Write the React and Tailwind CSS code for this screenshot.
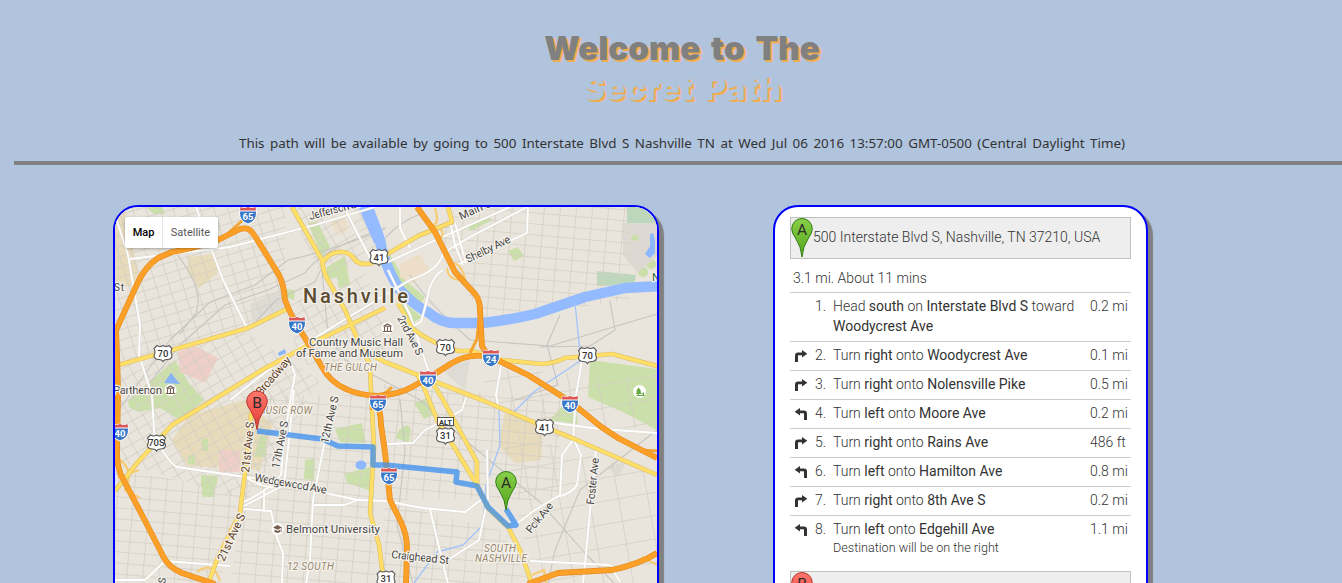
import React from "react";

const major = [
  "M115 334L117 328L138 282Q146 266 158 258L172 252Q195 248 218 240L240 229Q248 227 252 232L258 241L279 275Q284 285 285 300L290 312L297 325L308 343L322 367Q330 382 346 389Q358 395 378 396Q400 394 412 387L428 378L452 363Q468 354 483 356L495 359L528 375L552 390L572 403L600 426L618 438L657 458",
  "M417 207L435 232L455 272L475 294Q480 300 480 310L482 346L488 356",
  "M116 330L117 355L118 390L117 453Q117 465 121 475L142 515L163 556Q168 567 182 573L215 584",
  "M374 396Q381 410 381 425L384 445L387 470L390 500L401 522Q407 535 407 548L406 584",
  "M528 584L558 573L612 570Q640 564 657 553",
];
const yellow = [
  "M115 366L172 350L248 328L287 309",
  "M115 491L138 462L172 425L205 405L262 370L312 343L385 308",
  "M292 207L322 260Q323 272 329 282L345 310L362 350L370 364L371 392L374 447L370 513L379 545L384 584",
  "M323 262Q330 251 343 252Q351 253 355 260Q361 266 372 263L418 236L452 222L448 207",
  "M398 303L412 328Q430 343 458 351L472 351L502 360L542 364Q555 363 565 358L612 354L657 366",
  "M362 350L385 362L418 375L482 400L545 427L572 438L657 475",
  "M418 376L425 390L438 422L456 450L477 485",
  "M432 382L442 398L477 462L477 485L488 508L508 527L520 550L532 584",
  "M256 400L251 415L250 433L240 513L218 557L208 584",
];
const white = [
  "M115 215L128 255L140 325L139 355L152 395L154 432Q165 460 177 467L245 477Q268 490 276 487M245 477L285 481L330 494L358 500L385 501L423 508L465 512L482 499",
  "M196 207L211 248L223 280L247 328",
  "M130 259L230 247L315 225L375 207",
  "M344 207L372 262",
  "M230 400L290 353L385 295L410 280Q440 270 443 253L470 237L527 207",
  "M447 207L455 245L463 265M455 223L466 263",
  "M400 207L400 228L410 248",
  "M388 262L440 238L490 216L510 207",
  "M457 265L527 233L528 207",
  "M410 328L421 322L427 300Q430 278 443 270",
  "M388 270L410 315L435 391",
  "M288 355L295 375L292 390L284 440L281 475Q269 490 244 502M294 390L290 430L284 485L244 506M264 490L264 512M244 509L271 511L276 535L283 553L282 583",
  "M335 400L325 440L313 500L310 560L306 584",
  "M314 505L345 505L360 499",
  "M115 580L145 580L165 561L230 566",
  "M502 360L496 395L498 405M582 360L576 395L573 440L562 455L560 495L535 510L508 530",
  "M574 440L581 455L577 485Q573 493 557 497",
  "M596 450L586 553L583 584",
  "M555 423L600 429L657 433",
  "M530 561L610 565L620 582M430 509L436 535L448 584",
  "M387 444L413 443L425 430L450 417L462 410L466 398",
  "M487 450L488 498L479 540L440 565",
];
const rails = [
  "M140 395L180 345L225 305L268 290L305 273Q320 250 385 228",
  "M115 415L170 340L210 302L255 285L288 260Q335 250 385 229",
  "M248 330L276 300L315 282L330 250",
  "M176 253Q205 290 196 313L180 334",
  "M322 270L328 335L345 360L420 400L465 440L540 502L584 552L615 584",
  "M386 237Q400 222 420 214M410 275Q425 300 470 340L550 346L657 314",
  "M610 301L615 330L590 346L540 347M560 315L547 345L558 385L515 400",
  "M400 400L405 450L397 525L413 584",
  "M548 584L555 550L580 490L657 430",
];
const grids = [
  ["115,207 285,207 285,305 235,332 115,362", "ga"],
  ["286,305 365,274 405,355 300,366", "gb"],
  ["115,365 245,332 320,380 245,500 115,460", "gb"],
  ["245,395 373,395 375,583 230,583 245,500", "gc"],
  ["115,470 240,490 220,583 115,583", "gc"],
  ["290,207 372,207 390,250 322,280", "gb"],
  ["450,207 630,207 630,300 485,320 440,250", "gc"],
  ["384,384 560,400 560,500 384,500", "gc"],
  ["384,501 500,530 530,583 384,583", "gc"],
  ["480,370 657,375 657,430 500,420", "gd"],
  ["500,430 657,475 657,583 533,583", "gd"],
];

function Interstate({ x, y, n }) {
  return (
    <g transform={`translate(${x} ${y})`}>
      <path d="M-7.5-8Q-4-6 0-8Q4-6 7.5-8L8.5-3Q9 6 0 9Q-9 6-8.5-3Z" fill="#3877c8" stroke="#fff" strokeWidth="1" />
      <path d="M-7.5-8Q-4-6 0-8Q4-6 7.5-8L8-4H-8Z" fill="#dc5655" />
      <path d="M-8-4H8" stroke="#fff" strokeWidth="1" />
      <text y="4.5" textAnchor="middle" fontSize="9.5" fontWeight="700" fill="#fff">{n}</text>
    </g>
  );
}
function Route({ x, y, n }) {
  return (
    <g transform={`translate(${x} ${y})`}>
      <path d="M-6-8Q-3-6 0-8Q3-6 6-8L9-5Q7-2 9 2Q9 6 4 6Q1 6 0 8Q-1 6-4 6Q-9 6-9 2Q-7-2-9-5Z" fill="#fff" stroke="#555" strokeWidth="1.1" />
      <text y="3.2" textAnchor="middle" fontSize="9.5" fontWeight="500" fill="#333">{n}</text>
    </g>
  );
}
function PinShape({ red, letter }) {
  return (
    <g>
      <path d="M11 39Q10.3 29 4.5 20Q.7 15 .7 10.8A10.3 10.3 0 0 1 21.3 10.8Q21.3 15 17.5 20Q11.7 29 11 39Z" fill={red ? "url(#redpin)" : "url(#greenpin)"} stroke={red ? "#b6312b" : "#2f7d16"} strokeWidth="1" />
      <text x="11" y="17.3" textAnchor="middle" fontSize="15.5" fontWeight="400" fill="#2b2b2b" fontFamily="Roboto, sans-serif">{letter}</text>
    </g>
  );
}
function Gradients() {
  return (
    <defs>
      <linearGradient id="redpin" x1="0" y1="0" x2="0" y2="1"><stop stopColor="#ff776b" /><stop offset="1" stopColor="#e03a33" /></linearGradient>
      <linearGradient id="greenpin" x1="0" y1="0" x2="0" y2="1"><stop stopColor="#88cf48" /><stop offset="1" stopColor="#55a51c" /></linearGradient>
    </defs>
  );
}
function Grid({ id, angle, w, h }) {
  return (
    <pattern id={id} width={w} height={h} patternUnits="userSpaceOnUse" patternTransform={`rotate(${angle})`}>
      <path d={`M0 0H${w}M0 0V${h}`} stroke="#d3cec4" strokeWidth="1.5" fill="none" />
    </pattern>
  );
}
function Label({ x, y, w, r = 0, children, color = "#444", size = 11, italic }) {
  return (
    <text x={x} y={y} textLength={w} transform={r ? `rotate(${r} ${x} ${y})` : undefined} fontSize={size} fill={color} fontStyle={italic ? "italic" : "normal"} fontWeight={400} stroke="#f5f2ec" strokeWidth="2.5" strokeLinejoin="round" paintOrder="stroke">{children}</text>
  );
}
const draw = (list, stroke, strokeWidth) => list.map((d) => <path key={d} d={d} stroke={stroke} strokeWidth={strokeWidth} />);

function CityMap() {
  return (
    <svg viewBox="115 207 542 542" className="block h-[542px] w-[542px]" fontFamily="Roboto, sans-serif">
      <Gradients />
      <defs>
        <Grid id="ga" angle={-17} w={13} h={10} />
        <Grid id="gb" angle={-30} w={12} h={10} />
        <Grid id="gc" angle={5} w={16} h={11} />
        <Grid id="gd" angle={-10} w={29} h={23} />
      </defs>
      <rect x="115" y="207" width="542" height="542" fill="#e9e5dc" />
      <g fill="#e7dbbc">
        <path d="M115 207L125 207L139 275L130 286L115 286Z" /><path d="M188 257L215 254L218 273L199 288L187 272Z" />
        <path d="M190 415L245 400L273 424L260 470L188 466L172 440Z" /><path d="M505 413L543 427L541 460L515 463L498 445Z" />
      </g>
      <g fill="#cbdfaa">
        <path d="M128 400L175 360L188 382L204 400L180 420L160 408L138 412L129 407Z" /><path d="M308 223L317 221L330 247L322 257Z" />
        <path d="M327 267L345 256L350 285L339 288L337 277L327 280Z" /><path d="M387 250L406 281L425 297L420 305L400 290Z" />
        <path d="M402 301L422 317L412 324L404 320Z" /><path d="M508 251L518 247L524 256L514 261Z" /><path d="M467 226L488 215L492 220L471 231Z" />
        <path d="M590 360L657 369L657 430L623 412L588 397Z" /><path d="M335 429L362 423L366 443L340 442Z" /><path d="M345 474L370 467L371 491L347 483Z" />
        <path d="M305 460L315 459L314 480L304 479Z" /><path d="M396 438Q398 427 408 425L411 430L409 443Z" /><path d="M414 403L429 397L434 415L424 419Z" />
        <path d="M562 406L575 404L578 424L550 420Z" /><path d="M201 475L218 476L216 487H201ZM202 485H214V497H202Z" />
        <path d="M188 455H195V464H188ZM202 439H208V451H202ZM260 436H266V457H254Z" />
        <circle cx="643" cy="272" r="5" /><circle cx="651" cy="264" r="5" /><path d="M146 207H162L165 214H154ZM286 289L295 290L294 300L287 298Z" />
      </g>
      <g fill="#bdd7bd"><path d="M597 271L636 275L634 284L597 286ZM627 207H657V223H627Z" /></g>
      <path d="M623 223H657V256L637 273L623 255Z" fill="#ddd8d1" />
      <path d="M632 235L639 236L638 241L631 240Z" fill="#cbdfaa" />
      <g fill="#dedbd5"><path d="M250 304L281 290L291 308L252 320ZM442 370L470 360L465 390ZM607 467L628 460L618 477Z" /></g>
      <g fill="#edcfc7"><path d="M178 352L195 346L218 358L205 383L180 372ZM219 450H240V472H219Z" /></g>
      <path d="M400 264L420 254L430 270L412 284L400 277Z" fill="#ecdec9" /><path d="M330 222L345 217L348 230L337 235Z" fill="#ecdec9" />
      {grids.map(([points, id]) => <polygon key={points} points={points} fill={`url(#${id})`} />)}
      <g fill="none" strokeLinejoin="round">
        <g strokeLinecap="round">{draw(rails, "#c6c5c2", 1.1)}</g>
        <path d="M366 203Q373 220 380 240Q384 266 400 290Q415 306 429 313Q441 323 455 323L482 323Q510 320 535 314L585 297L625 288L660 286" stroke="#94bbff" strokeWidth="10.5" />
        <path d="M362 203L379 242" stroke="#94bbff" strokeWidth="10" />
        <path d="M650 234L653 233L655 240V253L650 258L645 254L650 246Z" fill="#8db7ff" />
        <path d="M575 303L580 353M580 361L535 391L514 412L499 409L500 445L486 485L483 525L463 545L437 552L414 583" stroke="#a3c4fa" strokeWidth="1.3" />
        <path d="M164 383L171 373L180 384ZM278 353L285 349L286 353L279 356Z" fill="#86b4f7" />
        <ellipse cx="361" cy="465" rx="5.5" ry="4.5" fill="#8db7ff" />
        {draw(white, "#dedad1", 2.8)}
        {draw(white, "#fff", 1.8)}
        <path d="M435 208Q440 225 432 225Q448 230 440 239M447 268Q448 282 465 279Q462 265 454 263M119 459Q135 470 125 490L140 498M118 478L139 470M197 572Q213 560 220 581M642 557L657 565M532 575L544 570L546 583" stroke="#f6cc76" strokeWidth="2.2" />
        {draw(yellow, "#d9bc64", 4.6)}
        {draw(yellow, "#ffdf68", 3.5)}
        <path d="M225 236L243 220M479 320L477 339L470 353M376 397Q386 394 392 387M617 436L640 450L657 451M376 397L371 410" stroke="#f4a531" strokeWidth="3" />
        {draw(major, "#e28a1d", 5.8)}
        {draw(major, "#fca027", 4.6)}
        <path d="M257 431L322 439L338 446L373 447L373 465L385 465L457 472L456 482L477 486L488 507L508 526L516 525L506 509" stroke="#398ff0" strokeOpacity=".75" strokeWidth="5.5" />
      </g>
      <Label x="310" y="220" r="-15" w="52">Jefferson St</Label>
      <Label x="461" y="220" r="-24" w="38">Main St</Label>
      <Label x="468" y="263" r="-26" w="48">Shelby Ave</Label>
      <Label x="114" y="291" w="10" size="10">St</Label>
      <text x="303" y="303" textLength="105" fontSize="20" fontWeight="500" fill="#5b4b31" stroke="#f5f2ec" strokeWidth="2.5" paintOrder="stroke">Nashville</text>
      <Label x="309" y="346" w="94" size="11.5">Country Music Hall</Label>
      <Label x="296" y="357" w="107" size="11.5">of Fame and Museum</Label>
      <Label x="324" y="370.5" w="53" color="#95866d" size="10" italic>THE GULCH</Label>
      <Label x="397" y="318" r="62" w="43">2nd Ave S</Label>
      <Label x="261" y="396" r="-49" w="47" color="#62401f" size="11.5">Broadway</Label>
      <Label x="113" y="394" w="49" size="11.5">Parthenon</Label>
      <Label x="257" y="413.5" w="55" color="#95866d" size="10" italic>MUSIC ROW</Label>
      <Label x="279" y="469" r="-79" w="48">17th Ave S</Label>
      <Label x="328" y="444" r="-77" w="48">12th Ave S</Label>
      <Label x="249" y="473" r="-84" w="51" color="#62401f" size="11.5">21st Ave S</Label>
      <Label x="224" y="562" r="-65" w="51" color="#62401f" size="11.5">21st Ave S</Label>
      <Label x="254" y="481" r="10" w="73">Wedgewood Ave</Label>
      <Label x="286" y="533" w="94" size="11.5">Belmont University</Label>
      <Label x="287" y="570" w="47" color="#95866d" size="10" italic>12 SOUTH</Label>
      <Label x="391" y="558" r="6" w="58">Craighead St</Label>
      <Label x="484" y="551.5" w="32" color="#95866d" size="10" italic>SOUTH</Label>
      <Label x="475" y="561.5" w="52" color="#95866d" size="10" italic>NASHVILLE</Label>
      <Label x="531" y="534" r="-51" w="36">Polk Ave</Label>
      <Label x="594" y="505" r="-84" w="47">Foster Ave</Label>
      <Label x="165" y="584" r="-80" w="6" size="10">S</Label>
      <Label x="652" y="281" w="9" size="11" color="#306537">N</Label>
      <Interstate x={248} y={215} n="65" /><Interstate x={297} y={325} n="40" /><Interstate x={491} y={358} n="24" /><Interstate x={428} y={379} n="40" />
      <Interstate x={570} y={404} n="40" /><Interstate x={378} y={403} n="65" /><Interstate x={389} y={476} n="65" /><Interstate x={120} y={432} n="40" />
      <Route x={379} y={257.5} n="41" /><Route x={163} y={353.5} n="70" /><Route x={445.5} y={347.5} n="70" /><Route x={587.5} y={355.5} n="70" />
      <Route x={156.5} y={443} n="70S" /><Route x={445.5} y={436} n="31" /><Route x={544.5} y={427.5} n="41" /><Route x={386} y={579} n="31" />
      <rect x="437.5" y="417.5" width="16" height="8" fill="#fff" stroke="#555" /><text x="445.5" y="424.5" textAnchor="middle" fontSize="7.5" fontWeight="700" fill="#333">ALT</text>
      {[[170.5, 390], [387.5, 328]].map(([x, y]) => (
        <g key={x} transform={`translate(${x} ${y})`}><circle r="6" fill="#fff" /><path d="M-4-1.8L0-4L4-1.8ZM-3-1V3M0-1V3M3-1V3M-4.5 3.5H4.5" fill="none" stroke="#765d50" strokeWidth="1.1" /></g>
      ))}
      <g transform="translate(277.5 529)"><circle r="6" fill="#fff" /><path d="M-4.5-1.5L0-4L4.5-1.5L0 .7ZM-3 .5V3L0 4L3 3V.5L0 2ZM4-1.5V3H4.5V-1.5Z" fill="#765d50" /></g>
      <g transform="translate(639.5 391.5)"><circle r="6.5" fill="#fff" /><path d="M-1-4L2 0H.5L2.5 2.5H-.5V4H-1.5V2.5H-4L-2 0H-3.5ZM3 1H4.5V4H3ZM-3 3.5H5V4.5H-3Z" fill="#65a63e" /></g>
      <g transform="translate(246 390.5)"><PinShape red letter="B" /></g>
      <g transform="translate(495 471)"><PinShape letter="A" /></g>
    </svg>
  );
}

function Turn({ left }) {
  return <svg viewBox="0 0 14 14" className={left ? "h-3.5 w-3.5 -scale-x-100" : "h-3.5 w-3.5"}><path d="M1 13V6.5Q1 3.5 4 3.5H8V1L13.3 4.8L8 8.5V6.3H4.5Q4 6.3 4 6.8V13Z" fill="#333" /></svg>;
}
const steps = [
  ["", <>Head <b className="font-normal">south</b> on <b className="font-normal">Interstate Blvd S</b> toward <b className="font-normal">Woodycrest Ave</b></>, "0.2 mi"],
  ["right", "Woodycrest Ave", "0.1 mi"],
  ["right", "Nolensville Pike", "0.5 mi"],
  ["left", "Moore Ave", "0.2 mi"],
  ["right", "Rains Ave", "486 ft"],
  ["left", "Hamilton Ave", "0.8 mi"],
  ["right", "8th Ave S", "0.2 mi"],
  ["left", "Edgehill Ave", "1.1 mi"],
];

function Place({ red, letter, children }) {
  return (
    <div className="flex h-[42px] border border-[#c0c0c0] bg-[#eee]">
      <svg viewBox="0 0 22 40" className="h-10 w-[22px] shrink-0"><PinShape red={red} letter={letter} /></svg>
      <span className="pt-[9px]">{children}</span>
    </div>
  );
}

export default function App() {
  return (
    <main className="h-screen overflow-hidden bg-[#b0c4de] font-['Noto_Sans',sans-serif] text-[#333]">
      <header className="flex h-[161px] flex-col items-center pt-[28px] pl-[22px]">
        <h1 className="text-center font-['Inter',sans-serif] text-[33px] leading-[40px] font-black text-[#808080] [text-shadow:2px_2px_#f0ad4e,3px_2px_#dbbccb]">
          <span className="block tracking-[0.1px] [word-spacing:4px]">Welcome to The</span>
          <span className="block tracking-[0.4px] text-[#b0c4de] [word-spacing:4px]">Secret Path</span>
        </h1>
        <p className="mt-[25px] whitespace-nowrap text-[13.4px] leading-5 [word-spacing:2px]">This path will be available by going to 500 Interstate Blvd S Nashville TN at Wed Jul 06 2016 13:57:00 GMT-0500 (Central Daylight Time)</p>
      </header>
      <div className="ml-[14px] h-1 bg-[#808080]" />
      <div className="flex gap-[114px] pt-10 pl-[113px]">
        <section className="grid h-[546px] w-[546px] shrink-0 overflow-hidden rounded-[25px] border-2 border-[#0000ff] shadow-[5px_5px_1px_#808080]">
          <div className="col-start-1 row-start-1"><CityMap /></div>
          <div className="z-10 col-start-1 row-start-1 mt-[10px] ml-[10px] flex h-[31px] w-[93px] rounded-[2px] bg-white font-['Roboto',sans-serif] text-[11px] leading-[31px] shadow-[0_1px_3px_rgba(0,0,0,0.3)]">
            <span className="w-[38px] border-r border-[#e5e5e5] text-center font-medium text-black">Map</span>
            <span className="flex-1 text-center text-[#565656]">Satellite</span>
          </div>
        </section>
        <section className="h-[546px] w-[375px] shrink-0 overflow-hidden rounded-[25px] border-2 border-[#0000ff] bg-white px-[15px] pt-[10px] font-['Roboto',sans-serif] text-[14px] leading-5 font-light shadow-[5px_5px_1px_#808080]">
          <Place letter="A">500 Interstate Blvd S, Nashville, TN 37210, USA</Place>
          <p className="mt-[9px] h-6 pl-[3px]">3.1 mi. About 11 mins</p>
          <ol>
            {steps.map(([side, road, distance], i) => (
              <li key={i} className="flex border-t border-[#cdcdcd] pt-[3px] pb-[5px]">
                <span className="w-[25px] pt-1 pl-1">{side && <Turn left={side === "left"} />}</span>
                <span className="w-[18px]">{i + 1}.</span>
                <span className="w-[257px]">
                  {side ? <>Turn <b className="font-normal">{side}</b> onto <b className="font-normal">{road}</b></> : road}
                  {i === 7 && <span className="block text-[12.6px] leading-[18px]">Destination will be on the right</span>}
                </span>
                <span>{distance}</span>
              </li>
            ))}
          </ol>
          <div className="mt-[9px]"><Place red letter="B">2100 Edgehill Ave, Nashville, TN 37212, USA</Place></div>
        </section>
      </div>
    </main>
  );
}
